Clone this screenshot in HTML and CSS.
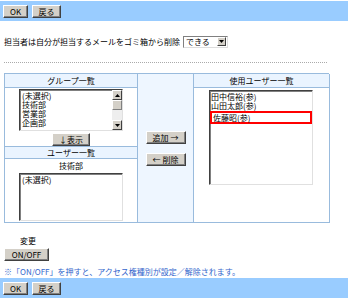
FILE: index.html
```html
<!DOCTYPE html>
<html lang="ja">
<head>
<meta charset="utf-8">
<link rel="stylesheet" href="styles.css">
</head>
<body>
<div class="bar top">
  <span class="btn">OK</span><span class="btn">戻る</span>
</div>
<div class="content">
  <div class="opt">担当者は自分が担当するメールをゴミ箱から削除 <span class="select"><span class="sel-text">できる</span><span class="sel-arrow"><svg width="5" height="3" viewBox="0 0 5 3"><path d="M0 0H5L2.5 3Z" fill="#000"/></svg></span></span></div>
  <div class="dots"></div>
  <div class="grid">
    <div class="head c1r1">グループ一覧</div>
    <div class="cell c1r2">
      <div class="list group">
        <div class="items">
          <div>(未選択)</div><div>技術部</div><div>営業部</div><div>企画部</div>
        </div>
        <div class="scroll">
          <span class="sbtn"><svg width="5" height="3" viewBox="0 0 5 3"><path d="M0 3H5L2.5 0Z" fill="#000"/></svg></span>
          <span class="thumb"></span>
          <span class="track"></span>
          <span class="sbtn"><svg width="5" height="3" viewBox="0 0 5 3"><path d="M0 0H5L2.5 3Z" fill="#000"/></svg></span>
        </div>
      </div>
      <span class="btn">↓表示</span>
    </div>
    <div class="head c1r3">ユーザー一覧</div>
    <div class="cell c1r4">
      <div class="label">技術部</div>
      <div class="list users"><div class="items"><div>(未選択)</div></div></div>
    </div>
    <div class="mid">
      <span class="btn">追加 →</span>
      <span class="btn">← 削除</span>
    </div>
    <div class="head c3r1">使用ユーザー一覧</div>
    <div class="cell c3r2">
      <div class="list used">
        <div class="items">
          <div>田中信裕(参)</div><div>山田太郎(参)</div><div class="hl">佐藤昭(参)</div>
        </div>
      </div>
    </div>
  </div>
  <div class="change">変更</div>
  <span class="btn onoff">ON/OFF</span>
  <div class="note">※「ON/OFF」を押すと、アクセス権種別が設定／解除されます。</div>
</div>
<div class="bar bottom">
  <span class="btn">OK</span><span class="btn">戻る</span>
</div>
</body>
</html>
```
FILE: styles.css
```css
html, body {
  margin: 0;
  padding: 0;
  background: #fff;
}
body {
  width: 350px;
  font-family: "Noto Sans CJK JP", "DejaVu Sans", sans-serif;
  font-size: 8px;
  line-height: 10px;
  color: #000;
}
.bar {
  width: 348px;
  height: 20px;
  background: #99ccff;
  display: flex;
  align-items: center;
  gap: 4px;
  padding-left: 3px;
  box-sizing: border-box;
}
.top { margin-top: 1px; }
.btn {
  display: inline-flex;
  align-items: center;
  justify-content: center;
  height: 13px;
  padding: 0 6px;
  background: #d4d0c8;
  border-top: 1px solid #fff;
  border-left: 1px solid #fff;
  border-right: 1px solid #404040;
  border-bottom: 1px solid #404040;
  box-shadow: inset -1px -1px 0 #808080;
  box-sizing: border-box;
  font-size: 8px;
  line-height: 9px;
  white-space: nowrap;
}
.bar .btn:first-child { width: 25px; }
.bar .btn:nth-child(2) { width: 29px; }
.content {
  padding: 0 4px;
}
.opt {
  margin-top: 14px;
  display: flex;
  align-items: center;
  height: 13px;
}
.select {
  display: inline-flex;
  align-items: center;
  width: 45px;
  height: 12px;
  margin-left: 3px;
  border: 1px solid #808080;
  border-right-color: #ddd;
  border-bottom-color: #ddd;
  box-sizing: border-box;
  background: #fff;
}
.sel-text { flex: 1; padding-left: 2px; line-height: 9px; }
.sel-arrow {
  width: 9px;
  height: 9px;
  margin-right: 1px;
  background: #d4d0c8;
  border-top: 1px solid #fff;
  border-left: 1px solid #fff;
  border-right: 1px solid #404040;
  border-bottom: 1px solid #404040;
  box-sizing: border-box;
  display: flex;
  align-items: center;
  justify-content: center;
}
.dots {
  margin-top: 14px;
  width: 323px;
  border-top: 1px dotted #aaa;
}
.grid {
  margin-top: 10px;
  width: 325px;
  height: 150px;
  display: grid;
  grid-template-columns: 133px 56px 136px;
  grid-template-rows: 14px 59px 12px 1fr;
  border-top: 1px solid #99bbdd;
  border-left: 1px solid #99bbdd;
  box-sizing: border-box;
}
.grid > div {
  border-right: 1px solid #99bbdd;
  border-bottom: 1px solid #99bbdd;
  box-sizing: border-box;
}
.head {
  background: #eaf4ff;
  display: flex;
  align-items: center;
  justify-content: center;
  line-height: 9px;
}
.c1r1 { grid-column: 1; grid-row: 1; }
.c1r2 { grid-column: 1; grid-row: 2; }
.c1r3 { grid-column: 1; grid-row: 3; }
.c1r4 { grid-column: 1; grid-row: 4; }
.c3r1 { grid-column: 3; grid-row: 1; }
.c3r2 { grid-column: 3; grid-row: 2 / 5; }
.mid {
  grid-column: 2;
  grid-row: 1 / 5;
  background: #eef6ff;
  display: flex;
  flex-direction: column;
  align-items: center;
  padding-top: 57px;
  gap: 9px;
}
.mid .btn { width: 40px; }
.cell {
  display: flex;
  flex-direction: column;
  align-items: center;
}
.c1r2 { padding-top: 1px; gap: 2px; }
.list {
  background: #fff;
  border-top: 1px solid #404040;
  border-left: 1px solid #404040;
  border-right: 1px solid #e0e0e0;
  border-bottom: 1px solid #e0e0e0;
  box-shadow: inset 1px 1px 0 #808080;
  box-sizing: border-box;
  display: flex;
}
.items { flex: 1; padding: 1px 0 0 2px; }
.items > div { height: 9px; line-height: 9px; white-space: nowrap; }
.group { width: 104px; height: 42px; }
.scroll {
  width: 10px;
  display: flex;
  flex-direction: column;
  background: #eee;
}
.sbtn {
  height: 10px;
  background: #d4d0c8;
  border-top: 1px solid #fff;
  border-left: 1px solid #fff;
  border-right: 1px solid #404040;
  border-bottom: 1px solid #404040;
  box-sizing: border-box;
  display: flex;
  align-items: center;
  justify-content: center;
}
.thumb {
  height: 10px;
  background: #d4d0c8;
  border-top: 1px solid #fff;
  border-left: 1px solid #fff;
  border-right: 1px solid #808080;
  border-bottom: 1px solid #808080;
  box-sizing: border-box;
}
.track { flex: 1; background: #eee; }
.c1r2 .btn { width: 38px; }
.c1r4 { padding-top: 2px; }
.label { height: 10px; line-height: 10px; }
.users { width: 104px; height: 48px; margin-top: 2px; }
.c3r2 { padding-top: 2px; align-items: flex-start; padding-left: 15px; }
.used { width: 104px; height: 95px; }
.used .items { padding-left: 1px; }
.items > .hl {
  margin-top: 1px;
  margin-left: -1px;
  height: 13px;
  line-height: 9px;
  border: 2px solid #ff0000;
  box-sizing: border-box;
  padding-left: 1px;
}
.change {
  margin-top: 13px;
  padding-left: 16px;
  height: 9px;
  line-height: 9px;
}
.onoff {
  margin-top: 3px;
  width: 45px;
}
.note {
  margin-top: 6px;
  color: #3366cc;
  white-space: nowrap;
  height: 9px;
  line-height: 9px;
}
.bottom { margin-top: 2px; }
```
